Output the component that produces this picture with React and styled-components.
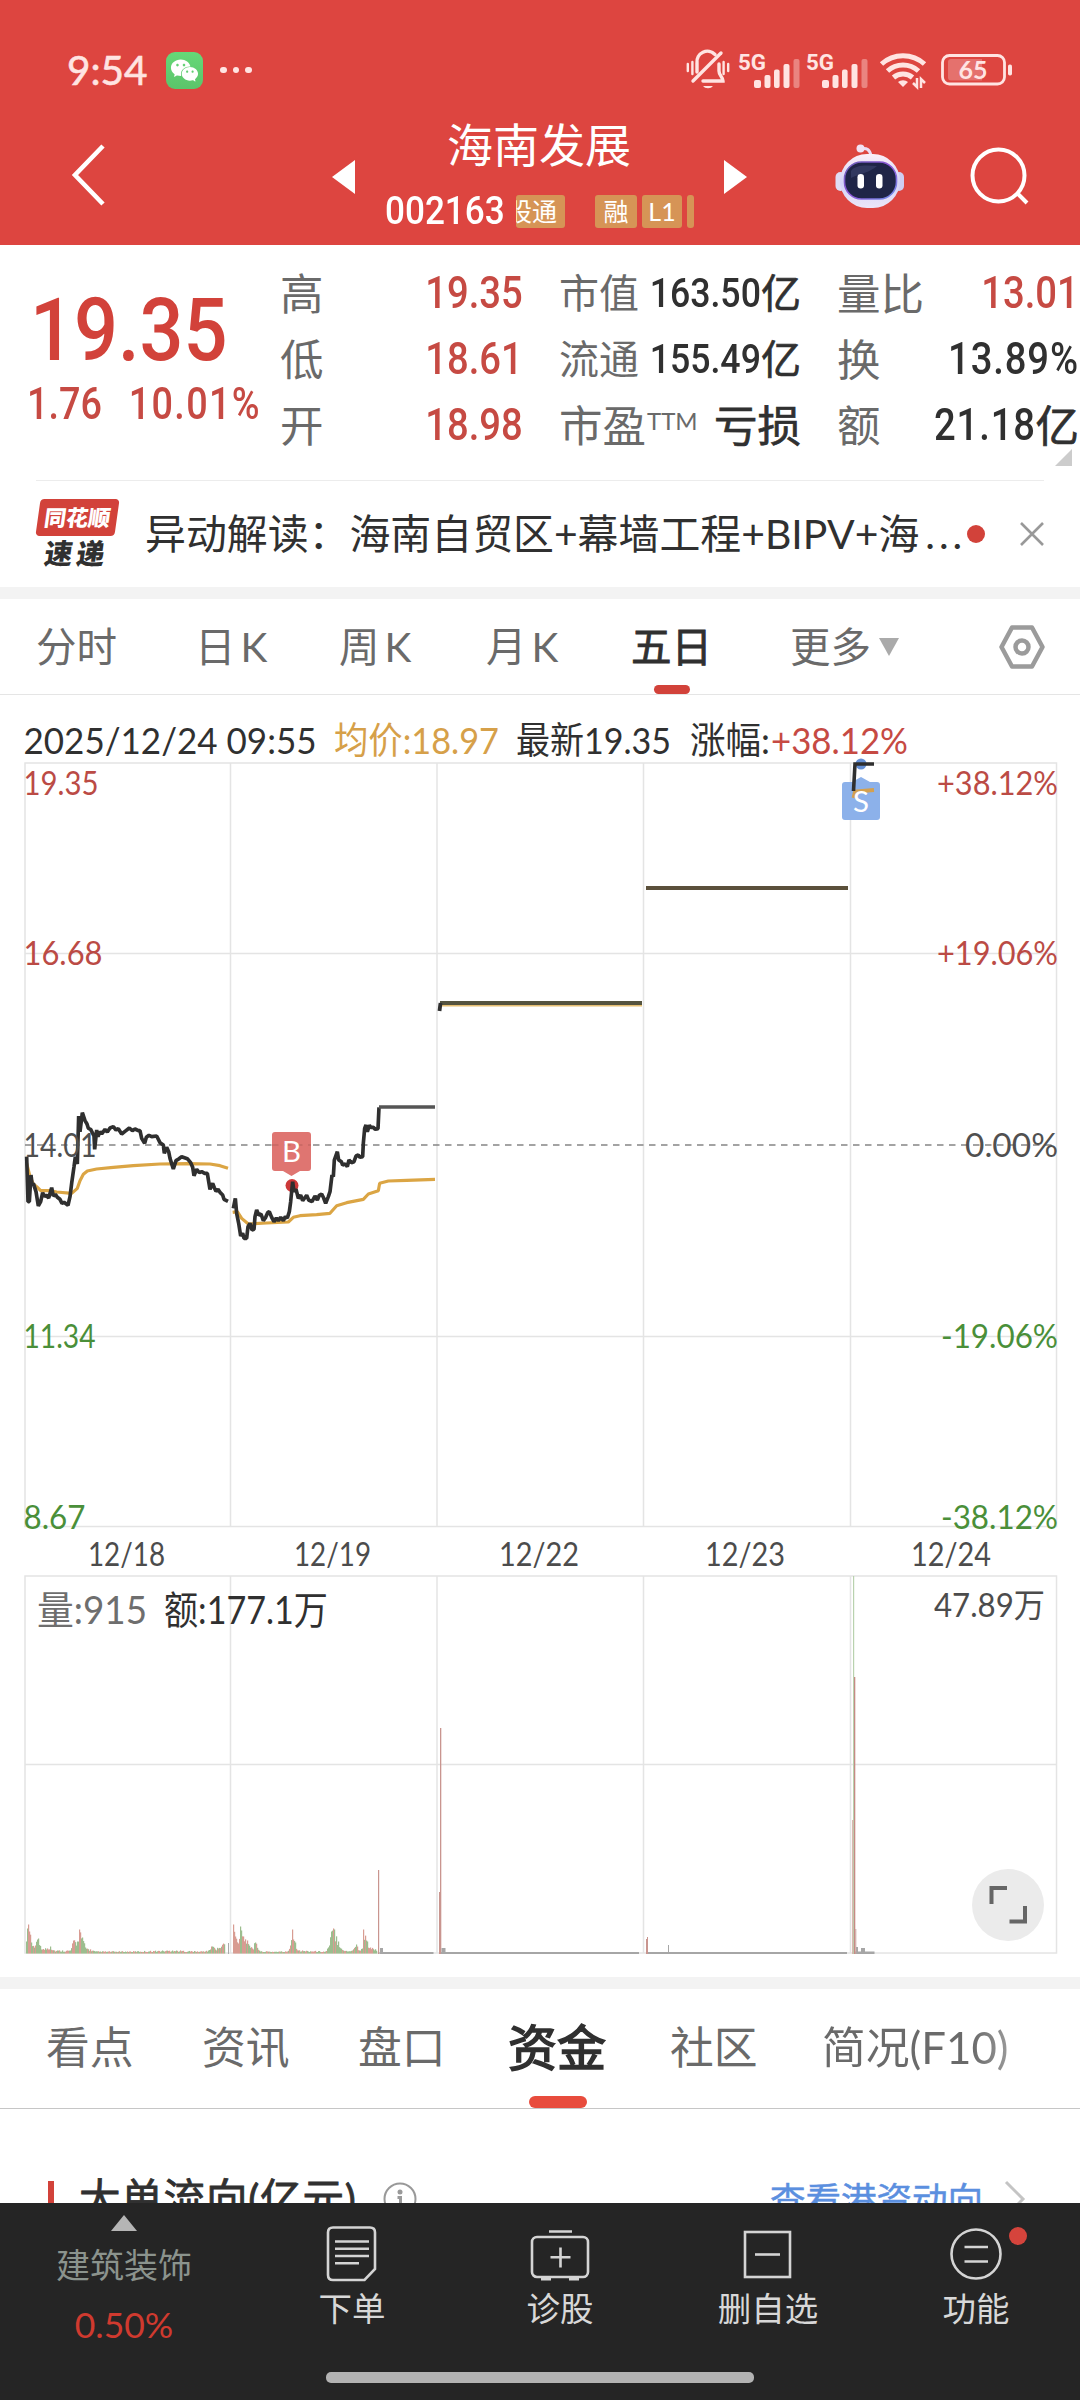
import styled, { createGlobalStyle } from "styled-components";
import { AiFillWechat } from "react-icons/ai";

const colors = {
  header: "#dd4540",
  red: "#d2423a",
  label: "#6a6a6a",
  text: "#303030",
  green: "#4a8f39",
  grid: "#e4e4e4",
};

const quotes = [
  [
    { label: "高", value: "19.35", red: true },
    { label: "低", value: "18.61", red: true },
    { label: "开", value: "18.98", red: true },
  ],
  [
    { label: "市值", value: "163.50", unit: "亿", small: true },
    { label: "流通", value: "155.49", unit: "亿", small: true },
    { label: "市盈", sup: "TTM", unit: "亏损" },
  ],
  [
    { label: "量比", value: "13.01", red: true },
    { label: "换", value: "13.89%" },
    { label: "额", value: "21.18", unit: "亿" },
  ],
];

const periods = ["分时", "日K", "周K", "月K", "五日"];
const sections = ["看点", "资讯", "盘口", "资金", "社区", "简况(F10)"];

const days = ["12/18", "12/19", "12/22", "12/23", "12/24"];
const dayLines = [230.5, 437, 643.5, 850.5];

const price1 =
  "80,290 84,425 88,425 93,345 97,378 100,370 108,395 115,438 122,425 128,398 133,410 138,405 146,414 155,383 160,408 166,403 172,412 180,418 186,430 192,427 204,436 210,410 215,370 222,320 226,290 232,312 236,168 240,215 247,158 255,182 261,192 265,205 272,208 282,228 284,268 290,210 294,230 300,215 305,222 315,208 322,216 330,204 340,200 348,210 355,206 365,222 375,214 388,204 397,212 405,207 415,212 420,212 425,235 434,250 439,232 447,226 455,230 470,228 480,248 490,255 493,280 500,262 506,275 510,295 520,327 528,302 536,297 545,290 562,296 572,308 578,322 582,347 590,328 598,338 605,335 614,340 622,340 630,388 638,370 643,383 648,394 654,388 660,397 668,405 672,418 684,424";
const price2 =
  "700,445 706,415 710,460 716,490 722,528 728,520 732,535 740,535 744,500 750,490 756,510 762,508 765,470 770,450 776,465 783,462 790,482 797,472 803,458 808,455 815,472 822,485 829,474 835,482 842,472 850,482 856,470 862,474 868,455 872,425 878,365 882,395 888,388 895,415 902,405 908,422 914,414 920,406 926,420 936,425 945,408 952,420 958,406 965,402 971,414 977,430 985,410 990,395 996,345 1000,350 1003,300 1012,275 1016,300 1024,305 1028,315 1036,312 1042,320 1047,300 1054,308 1062,305 1068,288 1075,285 1080,292 1088,290 1090,250 1094,205 1098,195 1102,215 1108,196 1112,202 1120,202 1126,208 1134,206 1137,142";
const avg1 =
  "80,310 90,350 100,372 110,380 122,392 150,392 170,396 215,400 232,385 240,362 250,343 262,333 290,327 340,322 400,317 480,312 560,311 630,312 660,317 684,325";
const avg2 =
  "698,457 712,455 725,475 745,492 800,489 865,486 880,472 900,467 950,464 990,460 1010,437 1040,428 1090,418 1105,402 1135,392 1139,370 1165,363 1220,361 1305,358";

// [x, height] envelope of the minute volumes, with spikes kept as is
const volume1 = [[26, 12], [27, 25], [28, 29], [29, 22], [31, 11], [35, 8], [38, 15], [42, 4], [50, 7], [54, 3], [70, 3], [73, 13], [77, 12], [79, 24], [82, 16], [85, 6], [95, 2], [130, 2], [172, 3], [200, 2], [208, 3], [211, 7], [218, 5], [225, 12]];
const volume2 = [[233, 29], [235, 17], [238, 10], [240, 27], [243, 17], [247, 13], [252, 5], [255, 11], [260, 2], [287, 2], [290, 8], [292, 24], [295, 11], [298, 3], [325, 2], [329, 8], [331, 22], [334, 24], [338, 12], [343, 3], [352, 3], [356, 9], [359, 3], [362, 5], [363, 24], [366, 13], [370, 6], [377, 3]];

function buildBars(points) {
  const bars = [];
  for (let i = 0; i < points.length - 1; i++) {
    const [x0, h0] = points[i];
    const [x1, h1] = points[i + 1];
    for (let x = x0; x < x1; x++) {
      const n = Math.abs(Math.sin(x * 12.9898) * 43758.5453) % 1;
      const base = h0 + ((h1 - h0) * (x - x0)) / (x1 - x0);
      bars.push({
        x,
        h: Math.max(1.5, x === x0 ? base : base * (0.55 + n * 0.6)),
        up: Math.abs(Math.sin(x * 78.233) * 9631.17) % 1 > 0.5,
      });
    }
  }
  return bars;
}

const bars = [...buildBars(volume1), ...buildBars(volume2)];

function BellOffIcon() {
  return (
    <svg width="44" height="40" viewBox="0 0 44 40" fill="none" stroke="#ffe4e2" strokeWidth="3.4" strokeLinecap="round">
      <path d="M7 31 L35 3" />
      <path d="M11 22 V13 A10.5 10.5 0 0 1 29 4.5" />
      <path d="M33 14 V21 C33 26 37 27 37 31 H17" />
      <path d="M17 36 H27 A5.5 4 0 0 1 17 36 Z" fill="#ffe4e2" stroke="none" />
      <path d="M1.8 14 V21 M6.4 12 V24 M37.6 12 V24 M42.2 14 V21" strokeWidth="2.4" />
    </svg>
  );
}

function SignalIcon() {
  return (
    <svg width="62" height="36" viewBox="0 0 62 36" fill="#ffe4e2">
      <text x="0" y="18" fontFamily="Roboto, sans-serif" fontWeight="700" fontSize="22" textLength="28" lengthAdjust="spacingAndGlyphs">5G</text>
      <rect x="16" y="28" width="7" height="8" rx="2" />
      <rect x="26.5" y="23" width="6" height="13" rx="2" />
      <rect x="36" y="17.5" width="5.6" height="18.5" rx="2" />
      <rect x="45.5" y="12" width="6" height="24" rx="2" />
      <rect x="55.5" y="7" width="6" height="29" rx="2" opacity="0.4" />
    </svg>
  );
}

function WifiIcon() {
  return (
    <svg width="48" height="38" viewBox="0 0 48 38" fill="none" stroke="#ffe4e2" strokeWidth="5">
      <path d="M1.5 13 A32 32 0 0 1 44.5 13" />
      <path d="M7.5 20 A23 23 0 0 1 38.5 20" />
      <path d="M13.5 26.5 A14.5 14.5 0 0 1 32.5 26.5" />
      <path d="M18 31 A7 6 0 0 1 28 31 L23 36 Z" fill="#ffe4e2" stroke="none" />
      <path d="M37 27 V36 L33 32 M41 37 V28 L45 32" strokeWidth="2.5" />
    </svg>
  );
}

function BatteryIcon() {
  return (
    <svg width="72" height="32" viewBox="0 0 72 32">
      <rect x="1.5" y="1.5" width="62" height="28.5" rx="7" fill="none" stroke="#ffe4e2" strokeWidth="2.8" />
      <path d="M10 5 H41 V26.5 H10 A3 3 0 0 1 7 23.5 V8 A3 3 0 0 1 10 5 Z" fill="#fff" opacity="0.24" />
      <rect x="67" y="10.5" width="4" height="11" rx="1.8" fill="#ffe4e2" />
      <text x="17.5" y="25" fontFamily="Lato, sans-serif" fontWeight="700" fontSize="25" fill="#ffe4e2" textLength="29">65</text>
    </svg>
  );
}

function RobotIcon() {
  return (
    <svg width="70" height="66" viewBox="0 0 70 66">
      <defs>
        <linearGradient id="shell" x1="0" y1="0" x2="0" y2="1">
          <stop offset="0" stopColor="#fbeff8" />
          <stop offset="0.55" stopColor="#d3d2f6" />
          <stop offset="1" stopColor="#ece6f8" />
        </linearGradient>
        <linearGradient id="rim" x1="0" y1="0" x2="1" y2="1">
          <stop offset="0" stopColor="#6a5fb6" />
          <stop offset="0.5" stopColor="#8d55d8" />
          <stop offset="1" stopColor="#6f8fe8" />
        </linearGradient>
      </defs>
      <path d="M25 5 C32 3 35 6 36 12" fill="none" stroke="#ecdcf4" strokeWidth="3" />
      <circle cx="25.5" cy="4.5" r="4" fill="#f1e2f4" />
      <rect x="0.500" y="28" width="10" height="19" rx="5" fill="#dfdcf5" />
      <rect x="59" y="28" width="10" height="19" rx="5" fill="#cfcdf2" />
      <rect x="5" y="10" width="60" height="54" rx="27" fill="url(#shell)" />
      <rect x="9.5" y="18" width="52" height="37" rx="17" fill="#1f2547" stroke="url(#rim)" strokeWidth="1.6" />
      <path d="M16 27 C20 21 30 21 42 22 C36 28 24 30 16 34 Z" fill="#39406a" opacity="0.7" />
      <rect x="22.5" y="30" width="6.5" height="14.5" rx="3.2" fill="#fff" />
      <rect x="41" y="30" width="6.5" height="14.5" rx="3.2" fill="#fff" />
    </svg>
  );
}

function PriceChart() {
  const axis = [
    { y: 783, left: "19.35", lw: 75, right: "+38.12%", rw: 121, color: "#bb4b45" },
    { y: 953, left: "16.68", lw: 79, right: "+19.06%", rw: 121, color: "#bb4b45" },
    { y: 1145, left: "14.01", lw: 73, right: "0.00%", rw: 93, color: "#505050" },
    { y: 1336, left: "11.34", lw: 72, right: "-19.06%", rw: 117, color: colors.green },
    { y: 1517, left: "8.67", lw: 62, right: "-38.12%", rw: 117, color: colors.green },
  ];
  return (
    <svg width="1080" height="819" viewBox="0 756 1080 819">
      <g stroke={colors.grid} strokeWidth="1.5">
        <rect x="25" y="763" width="1031.5" height="763.5" fill="none" />
        {dayLines.map((x) => <line key={x} x1={x} x2={x} y1="763" y2="1527" />)}
        <line x1="25" x2="1057" y1="953.5" y2="953.5" />
        <line x1="25" x2="1057" y1="1336.5" y2="1336.5" />
      </g>
      <line x1="25" x2="1057" y1="1145" y2="1145" stroke="#858585" strokeWidth="1.5" strokeDasharray="6.5 5.5" />
      <circle cx="292" cy="1185.5" r="6.5" fill="#cc3838" />
      <g transform="translate(0 1060) scale(0.33333)" fill="none" strokeLinejoin="bevel">
        <g stroke="#dba544" strokeWidth="9.5">
          <polyline points={avg1} />
          <polyline points={avg2} />
        </g>
        <g stroke="#2f2f2f" strokeWidth="11">
          <polyline points={price1} />
          <polyline points={price2} />
        </g>
        <line x1="1137" x2="1305" y1="141" y2="141" stroke="#555" strokeWidth="11" />
      </g>
      <line x1="440" x2="642" y1="1005.3" y2="1005.3" stroke="#e6bf72" strokeWidth="2.5" />
      <line x1="440" x2="642" y1="1003" y2="1003" stroke="#55543f" strokeWidth="3.8" />
      <line x1="440.5" x2="439.5" y1="1003" y2="1011" stroke="#2f2f2f" strokeWidth="3.8" />
      <line x1="646" x2="848" y1="888" y2="888" stroke="#5b503b" strokeWidth="4" />

      <path d="M275 1132 H308 A3 3 0 0 1 311 1135 V1168 A3 3 0 0 1 308 1171 H300 L291.5 1176 L283 1171 H275 A3 3 0 0 1 272 1168 V1135 A3 3 0 0 1 275 1132 Z" fill="#df7571" />
      <line x1="272" x2="311" y1="1145" y2="1145" stroke="#b9605d" strokeDasharray="6.5 5.5" />
      <ChartText x="282" y="1162" fontSize="29" fill="#fff" textLength="19">B</ChartText>

      <path d="M845 782 H852 L861 777 L870 782 H877 A3 3 0 0 1 880 785 V817 A3 3 0 0 1 877 820 H845 A3 3 0 0 1 842 817 V785 A3 3 0 0 1 845 782 Z" fill="#8cb1ea" />
      <circle cx="861" cy="764" r="5.5" fill="#6590d6" />
      <polyline points="853.5,798 855,791.5 874,790" fill="none" stroke="#d3a050" strokeWidth="3.8" />
      <polyline points="853.5,791 855,764 874,764" fill="none" stroke="#2f2f2f" strokeWidth="3.6" />
      <ChartText x="853" y="811.5" fontSize="29" fill="#fff" textLength="16">S</ChartText>

      {axis.map((a) => (
        <g key={a.y} fill={a.color}>
          <ChartText x="23.5" y={a.y + 12} textLength={a.lw}>{a.left}</ChartText>
          <ChartText x={1058 - a.rw} y={a.y + 12} textLength={a.rw}>{a.right}</ChartText>
        </g>
      ))}
      {days.map((day, i) => (
        <ChartText key={day} x={(i > 1 ? 87 : 88) + i * 206} y="1566" textLength={i > 1 ? 80 : 77} fill="#4c4c4c">{day}</ChartText>
      ))}
    </svg>
  );
}

function VolumeChart() {
  return (
    <svg width="1080" height="402" viewBox="0 1575 1080 402">
      <g stroke={colors.grid} strokeWidth="1.5" fill="none">
        <rect x="25" y="1576" width="1031.5" height="377" />
        {dayLines.map((x) => <line key={x} x1={x} x2={x} y1="1576" y2="1953" />)}
        <line x1="25" x2="1057" y1="1764.5" y2="1764.5" />
      </g>
      {bars.map((b) => (
        <rect key={b.x} x={b.x} y={1953.5 - b.h} width="1.2" height={b.h} fill={b.up ? "#d89c92" : "#9cbd8e"} />
      ))}
      <rect x="228" y="1943" width="1" height="11" fill="#aaa" />
      <g fill="#c9958f">
        <rect x="378" y="1870" width="1.2" height="84" />
        <rect x="439" y="1892" width="1" height="62" />
        <rect x="440" y="1728" width="1.3" height="226" />
        <rect x="646" y="1939" width="1" height="15" />
        <rect x="647" y="1937" width="1" height="17" />
      </g>
      <g fill="#a6a6a6">
        <rect x="379.5" y="1952" width="54" height="2" />
        <rect x="380" y="1948" width="3" height="6" />
        <rect x="441" y="1952" width="198" height="2" />
        <rect x="441.5" y="1948" width="4" height="6" />
        <rect x="648" y="1952" width="199" height="2" />
        <rect x="668" y="1945" width="1" height="8" />
        <rect x="855" y="1951.5" width="19.5" height="2.5" />
        <rect x="856" y="1947" width="2" height="7" />
        <rect x="861" y="1948" width="4" height="6" />
      </g>
      <rect x="853" y="1576" width="1.2" height="378" fill="#b9d2ae" />
      <rect x="852.2" y="1820" width="1" height="134" fill="#d2a79e" />
      <rect x="854" y="1677" width="1.3" height="277" fill="#c58b84" />
      <rect x="855.3" y="1929" width="1" height="25" fill="#c9a39f" />
      <ChartText x="37" y="1623.5" fontSize="39" textLength="110" fill="#6e6e6e">量:915</ChartText>
      <ChartText x="164" y="1623.5" fontSize="39" textLength="164" fill="#303030">额:177.1万</ChartText>
      <ChartText x="934" y="1617" textLength="111" fill="#4c4c4c">47.89万</ChartText>
      <circle cx="1008" cy="1905" r="36" fill="#ebebeb" />
      <path d="M1007 1888 H991.5 V1904 M1009.5 1921.5 H1025 V1906" fill="none" stroke="#666" strokeWidth="4" />
    </svg>
  );
}

export default function App() {
  return (
    <Page>
      <GlobalStyle />
      <Header>
        <StatusBar>
          <Clock>9:54</Clock>
          <WechatBadge><AiFillWechat size={31} color="#fff" /></WechatBadge>
          <Dots><i /><i /><i /></Dots>
          <StatusIcons>
            <BellOffIcon />
            <SignalIcon />
            <SignalIcon />
            <WifiIcon />
            <BatteryIcon />
          </StatusIcons>
        </StatusBar>
        <NavBar>
          <BackIcon width="36" height="62" viewBox="0 0 36 62" fill="none" stroke="#fff" strokeWidth="4.6">
            <path d="M32 2 L4 31 L32 60" />
          </BackIcon>
          <Arrow $left />
          <StockTitle>
            <h1>海南发展</h1>
            <div>
              <Code>002163</Code>
              <Tag $clip><span>股通</span></Tag>
              <Tag $width={42} $gap={30}>融</Tag>
              <Tag $width={40} $gap={5}>L1</Tag>
              <Tag $width={7} $gap={5} />
            </div>
          </StockTitle>
          <Arrow />
          <Robot><RobotIcon /></Robot>
          <SearchIcon width="60" height="60" viewBox="0 0 60 60" fill="none" stroke="#fff" strokeWidth="4">
            <circle cx="28.5" cy="28.5" r="26" />
            <path d="M47 46 L57 56" />
          </SearchIcon>
        </NavBar>
      </Header>

      <QuotePanel>
        <PriceBlock>
          <LastPrice>19.35</LastPrice>
          <Change>
            <span>1.76</span>
            <span>10.01%</span>
          </Change>
        </PriceBlock>
        {quotes.map((column, i) => (
          <QuoteColumn key={i} $index={i}>
            {column.map((q) => (
              <QuoteRow key={q.label}>
                <Label $small={q.small}>{q.label}{q.sup && <sup>{q.sup}</sup>}</Label>
                <Value $red={q.red} $small={q.small}>
                  {q.value && <Num $small={q.small} $red={q.red}>{q.value}</Num>}
                  {q.unit}
                </Value>
              </QuoteRow>
            ))}
          </QuoteColumn>
        ))}
        <Corner />
      </QuotePanel>

      <NewsBar>
        <Logo>
          <b>同花顺</b>
          <em>速递</em>
        </Logo>
        <p>异动解读：海南自贸区+幕墙工程+BIPV+海<span>...</span></p>
        <RedDot />
        <svg width="24" height="24" viewBox="0 0 24 24" stroke="#999" strokeWidth="2.6">
          <path d="M1 1 L23 23 M23 1 L1 23" />
        </svg>
      </NewsBar>
      <Divider />

      <PeriodTabs>
        {periods.map((name) => (
          <Period key={name} $active={name === "五日"} $spaced={name.endsWith("K")}>{name}</Period>
        ))}
        <Period>更多<Caret /></Period>
        <svg width="46" height="44" viewBox="0 0 46 44" fill="none" stroke="#9b9b9b" strokeWidth="4.5" strokeLinejoin="round">
          <path d="M13 2.5 H33 L43.5 22 L33 41.5 H13 L2.5 22 Z" />
          <circle cx="23" cy="22" r="6.5" />
        </svg>
      </PeriodTabs>

      <svg width="1080" height="61" viewBox="0 695 1080 61">
        <ChartText x="23.5" y="754" fontSize="37" textLength="293" fill="#303030">2025/12/24 09:55</ChartText>
        <ChartText x="334" y="754" fontSize="37" textLength="165" fill="#d6a049">均价:18.97</ChartText>
        <ChartText x="516" y="754" fontSize="37" textLength="155" fill="#303030">最新19.35</ChartText>
        <ChartText x="690" y="754" fontSize="37" textLength="80" fill="#303030">涨幅:</ChartText>
        <ChartText x="771" y="754" fontSize="37" textLength="137" fill="#c64a43">+38.12%</ChartText>
      </svg>
      <PriceChart />
      <VolumeChart />
      <Divider />

      <SectionTabs>
        {sections.map((name) => (
          <Section key={name} $active={name === "资金"} $last={name.startsWith("简况")}>{name}</Section>
        ))}
      </SectionTabs>

      <FlowHeader>
        <Mark />
        <h2>大单流向(亿元)</h2>
        <svg width="34" height="34" viewBox="0 0 34 34" fill="none" stroke="#999" strokeWidth="2">
          <circle cx="17" cy="17" r="15.5" />
          <circle cx="17" cy="10" r="2.5" fill="#999" stroke="none" />
          <path d="M14.5 15.5 H17.5 V25" strokeWidth="3" />
        </svg>
        <a>查看港资动向</a>
        <svg width="22" height="38" viewBox="0 0 22 38" fill="none" stroke="#c4c4c4" strokeWidth="3">
          <path d="M2 2 L19 19 L2 36" />
        </svg>
      </FlowHeader>

      <BottomBar>
        <Sector>
          <i />
          <span>建筑装饰</span>
          <b>0.50%</b>
        </Sector>
        <BottomItem>
          <svg width="60" height="56" viewBox="0 0 60 56" fill="none" stroke="#d4d4d4" strokeWidth="2.6">
            <path d="M11 1.5 H48 Q53 1.5 53 6.5 V43 L42.5 54 H11 Q6 54 6 49 V6.5 Q6 1.5 11 1.5 Z" />
            <path d="M13 15.5 H47 M13 22.8 H47 M13 30 H47 M13 37.2 H37" />
          </svg>
          下单
        </BottomItem>
        <BottomItem>
          <svg width="60" height="56" viewBox="0 0 60 56" fill="none" stroke="#d4d4d4" strokeWidth="2.6">
            <rect x="2" y="11" width="56" height="40" rx="5" />
            <path d="M19 5.5 H42 M30.5 21.5 V41.5 M20.5 31.3 H40.5" />
            <path d="M11 53 H21 M39 53 H49" strokeWidth="3" />
          </svg>
          诊股
        </BottomItem>
        <BottomItem>
          <svg width="60" height="56" viewBox="0 0 60 56" fill="none" stroke="#d4d4d4" strokeWidth="2.6">
            <rect x="7" y="6" width="45" height="45" />
            <path d="M17 28.5 H42" />
          </svg>
          删自选
        </BottomItem>
        <BottomItem>
          <svg width="60" height="56" viewBox="0 0 60 56" fill="none" stroke="#d4d4d4" strokeWidth="2.6">
            <circle cx="30" cy="28" r="24.5" />
            <path d="M18.5 21 H42 M18.5 35.5 H42" />
          </svg>
          功能
          <NoticeDot />
        </BottomItem>
        <HomeIndicator />
      </BottomBar>
    </Page>
  );
}

const GlobalStyle = createGlobalStyle`
  * {
    box-sizing: border-box;
  }
  body {
    margin: 0;
    background: #fff;
    font-family: Lato, "Noto Sans CJK SC", sans-serif;
  }
  h1, h2, p {
    margin: 0;
    font-weight: 400;
  }
  svg {
    display: block;
    flex-shrink: 0;
    overflow: visible;
  }
`;

const Page = styled.div`
  position: relative;
  width: 1080px;
  height: 2400px;
  overflow: hidden;
  background: #fff;
`;

const ChartText = styled.text.attrs((p) => ({
  lengthAdjust: "spacingAndGlyphs",
  fontSize: p.fontSize || 33.5,
}))`
  font-family: Lato, "Noto Sans CJK SC", sans-serif;
`;

const Header = styled.header`
  height: 245px;
  background: ${colors.header};
`;

const StatusBar = styled.div`
  display: flex;
  align-items: center;
  height: 112px;
  padding: 28px 67px 0;
`;

const Clock = styled.span`
  width: 99px;
  font-size: 40.5px;
  line-height: 40px;
  color: #ffe4e2;
  -webkit-text-stroke: 0.6px #ffe4e2;
`;

const WechatBadge = styled.span`
  display: flex;
  align-items: center;
  justify-content: center;
  width: 37px;
  height: 37px;
  border-radius: 9px;
  background: linear-gradient(#66d878, #5bc46a);
`;

const Dots = styled.span`
  display: flex;
  gap: 6px;
  margin-left: 17px;
  i {
    width: 6.5px;
    height: 6.5px;
    border-radius: 50%;
    background: #ffe4e2;
  }
`;

const StatusIcons = styled.div`
  display: flex;
  align-items: center;
  gap: 8px;
  margin-left: auto;
  svg:nth-child(3) { margin-left: -2px; }
  svg:nth-child(4) { margin-left: 4px; }
  svg:nth-child(5) { margin-left: 5px; }
`;

const NavBar = styled.div`
  display: flex;
  align-items: flex-start;
  height: 133px;
  padding: 0 50px 0 71px;
`;

const BackIcon = styled.svg`
  margin-top: 32px;
`;

const SearchIcon = styled.svg`
  margin: 35px 0 0 auto;
`;

const Arrow = styled.i`
  width: 0;
  height: 0;
  margin: 48px 0 0 ${(p) => (p.$left ? 225 : 29)}px;
  border: 17px solid transparent;
  border-${(p) => (p.$left ? "right" : "left")}: 23px solid #fff;
  border-${(p) => (p.$left ? "left" : "right")}: 0;
`;

const StockTitle = styled.div`
  width: 310px;
  margin-left: 30px;
  h1 {
    height: 80px;
    padding-right: 2px;
    color: #fff;
    font-size: 46px;
    line-height: 65px;
    text-align: center;
  }
  div {
    display: flex;
    align-items: center;
    height: 38px;
  }
`;

const Code = styled.span`
  width: 131px;
  flex-shrink: 0;
  font: 500 39px/38px Roboto, sans-serif;
  color: #fff;
  white-space: nowrap;
  transform: scaleX(0.9);
  transform-origin: left;
`;

const Tag = styled.span`
  display: flex;
  align-items: center;
  justify-content: ${(p) => (p.$clip ? "flex-end" : "center")};
  flex-shrink: 0;
  width: ${(p) => p.$width || 49}px;
  height: 33px;
  margin-left: ${(p) => p.$gap || 0}px;
  padding-right: ${(p) => (p.$clip ? 8 : 0)}px;
  overflow: hidden;
  border-radius: 3px;
  background: #d69456;
  color: #fff;
  font-size: 25px;
  line-height: 33px;
  white-space: nowrap;
  span {
    flex-shrink: 0;
  }
`;

const Robot = styled.span`
  margin: 32px 0 0 88px;
`;

const QuotePanel = styled.section`
  position: relative;
  display: flex;
  height: 236px;
  &::after {
    content: "";
    position: absolute;
    left: 36px;
    right: 36px;
    bottom: 0;
    height: 1px;
    background: #ececec;
  }
`;

const PriceBlock = styled.div`
  width: 280px;
  padding: 41px 0 0 30px;
  font-family: Roboto, sans-serif;
  color: ${colors.red};
`;

const LastPrice = styled.div`
  height: 92px;
  font-size: 88px;
  font-weight: 500;
  line-height: 88px;
  transform: scaleX(0.88);
  transform-origin: left;
`;

const Change = styled.div`
  display: flex;
  width: 290px;
  font-size: 45px;
  font-weight: 500;
  line-height: 52px;
  transform: scaleX(0.84);
  transform-origin: left;
  margin-left: -3px;
  color: #c64a43;
  span:first-child {
    flex-shrink: 0;
    width: 121px;
  }
  span:last-child {
    letter-spacing: 1.6px;
  }
`;

const QuoteColumn = styled.div`
  width: ${(p) => [243, 242, 242][p.$index]}px;
  margin-left: ${(p) => [0, 36, 36][p.$index]}px;
  padding-top: 15px;
`;

const QuoteRow = styled.div`
  display: flex;
  align-items: center;
  justify-content: space-between;
  height: 66px;
`;

const Label = styled.span`
  color: ${colors.label};
  font-size: ${(p) => (p.$small ? 40 : 43.5)}px;
  line-height: 60px;
  white-space: nowrap;
  sup {
    font-size: 24px;
    vertical-align: 12px;
    line-height: 0;
    margin-left: 1px;
  }
`;

const Value = styled.span`
  display: flex;
  align-items: center;
  justify-content: flex-end;
  font-size: ${(p) => (p.$small ? 40 : 43.5)}px;
  line-height: 60px;
  color: ${(p) => (p.$red ? "#c64a43" : colors.text)};
  -webkit-text-stroke: 0.7px currentColor;
`;

const Num = styled.span`
  font: 500 ${(p) => (p.$small ? 41 : 45)}px/62px Roboto, sans-serif;
  letter-spacing: ${(p) => (p.$small || p.$red ? 0 : 1)}px;
  margin-left: -20px;
  transform: scaleX(${(p) => (p.$small ? 0.87 : 0.85)});
  transform-origin: right;
  -webkit-text-stroke: 0;
`;

const Corner = styled.i`
  position: absolute;
  right: 8px;
  bottom: 15px;
  border-left: 17px solid transparent;
  border-bottom: 17px solid #ccc;
`;

const NewsBar = styled.section`
  display: flex;
  align-items: center;
  height: 106px;
  padding: 0 36px;
  p {
    width: 817px;
    margin-left: 27px;
    font-size: 40.9px;
    line-height: 60px;
    color: ${colors.text};
    white-space: nowrap;
    span {
      letter-spacing: 4px;
      margin-left: 6px;
    }
  }
`;

const Logo = styled.div`
  display: flex;
  flex-direction: column;
  align-items: center;
  width: 82px;
  margin-top: -2px;
  font-family: "Noto Sans CJK SC", sans-serif;
  font-weight: 900;
  b, em {
    font-style: normal;
    transform: skewX(-8deg);
  }
  b {
    width: 79px;
    height: 37px;
    border-radius: 4px;
    background: ${colors.red};
    color: #fff;
    font-size: 22px;
    line-height: 35px;
    text-align: center;
    font-weight: 900;
  }
  em {
    color: ${colors.text};
    font-size: 28px;
    line-height: 32px;
    letter-spacing: 4px;
  }
`;

const RedDot = styled.i`
  width: 18px;
  height: 18px;
  margin-right: auto;
  margin-left: 5px;
  border-radius: 50%;
  background: ${colors.red};
`;

const Divider = styled.div`
  height: 12px;
  background: #f3f3f3;
`;

const PeriodTabs = styled.nav`
  display: grid;
  grid-template-columns: 159px 144px 147px 145px 159px 209px 46px;
  align-items: center;
  height: 96px;
  padding-left: 36px;
  border-bottom: 1px solid #e5e5e5;
`;

const Period = styled.span`
  position: relative;
  display: flex;
  align-items: center;
  font-size: 40.5px;
  line-height: 94px;
  letter-spacing: ${(p) => (p.$spaced ? 5 : 0)}px;
  color: ${(p) => (p.$active ? colors.text : colors.label)};
  -webkit-text-stroke: ${(p) => (p.$active ? 0.8 : 0)}px currentColor;
  &::after {
    content: "";
    display: ${(p) => (p.$active ? "block" : "none")};
    position: absolute;
    left: 23px;
    bottom: 0;
    width: 36px;
    height: 9px;
    border-radius: 5px;
    background: ${colors.red};
  }
`;

const Caret = styled.i`
  margin-left: 8px;
  border: 10.5px solid transparent;
  border-top: 18px solid #aaa;
  border-bottom: 0;
`;

const SectionTabs = styled.nav`
  display: grid;
  grid-template-columns: 156px 156px 150px 162px 152px 220px;
  align-items: center;
  height: 120px;
  padding-left: 46px;
  border-bottom: 1px solid #c6c6c6;
`;

const Section = styled.span`
  position: relative;
  height: 119px;
  font-size: ${(p) => (p.$active ? 49 : 43.8)}px;
  line-height: 116px;
  color: ${(p) => (p.$active ? colors.text : colors.label)};
  -webkit-text-stroke: ${(p) => (p.$active ? 1.6 : 0)}px currentColor;
  white-space: nowrap;
  ${(p) => p.$last && "background: linear-gradient(90deg, #6a6a6a 150px, #999 186px); background-clip: text; color: transparent;"}
  &::after {
    content: "";
    display: ${(p) => (p.$active ? "block" : "none")};
    position: absolute;
    left: 21px;
    bottom: 0;
    width: 58px;
    height: 12px;
    border-radius: 6px;
    background: #e84c3d;
  }
`;

const FlowHeader = styled.section`
  display: flex;
  align-items: center;
  height: 60px;
  margin-top: 60px;
  padding: 0 54px 0 48px;
  h2 {
    width: 277px;
    margin: -3px 27px 0 25px;
    color: ${colors.text};
    font-size: 41.5px;
    line-height: 60px;
    letter-spacing: 0.8px;
    -webkit-text-stroke: 0.8px ${colors.text};
    white-space: nowrap;
  }
  a {
    margin: -4px 21px 0 auto;
    color: #5b8fdf;
    font-size: 35.5px;
    -webkit-text-stroke: 0.5px #5b8fdf;
  }
`;

const Mark = styled.i`
  width: 6px;
  height: 36px;
  background: ${colors.red};
`;

const BottomBar = styled.footer`
  position: absolute;
  left: 0;
  bottom: 0;
  display: flex;
  width: 1080px;
  height: 197px;
  background: #252525;
`;

const Sector = styled.div`
  display: flex;
  flex-direction: column;
  align-items: center;
  width: 248px;
  padding-top: 12px;
  i {
    border: 13.5px solid transparent;
    border-bottom: 16px solid #b5b5b5;
    border-top: 0;
  }
  span {
    margin-top: 10px;
    color: #8b938d;
    font-size: 34px;
    line-height: 48px;
  }
  b {
    margin-top: 12px;
    color: #d03a2f;
    font-size: 35.5px;
    line-height: 48px;
    font-weight: 400;
  }
`;

const BottomItem = styled.div`
  position: relative;
  display: flex;
  flex-direction: column;
  align-items: center;
  width: 208px;
  padding-top: 23px;
  color: #d8d8d8;
  font-size: 33.5px;
  line-height: 53px;
  white-space: nowrap;
`;

const NoticeDot = styled.i`
  position: absolute;
  top: 24px;
  left: 137px;
  width: 18px;
  height: 18px;
  border-radius: 50%;
  background: #d5443c;
`;

const HomeIndicator = styled.i`
  position: absolute;
  left: 326px;
  bottom: 17px;
  width: 428px;
  height: 11px;
  border-radius: 5px;
  background: #b3b3b3;
`;
